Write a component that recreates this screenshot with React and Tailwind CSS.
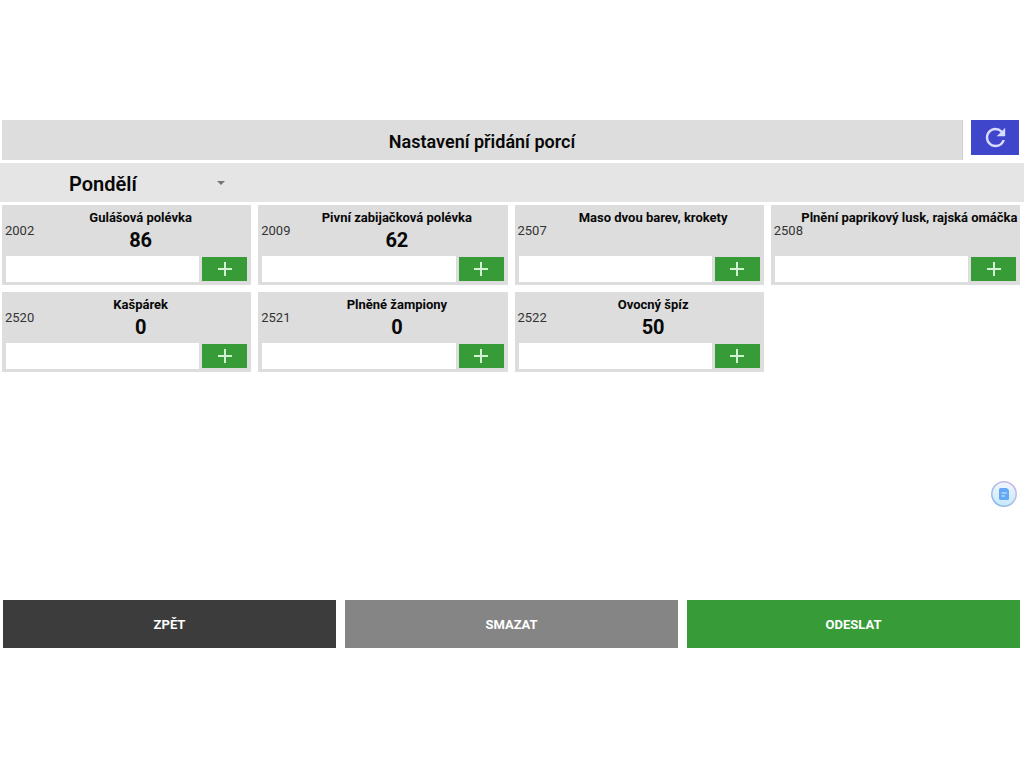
import React from "react";
import { MdRefresh } from "react-icons/md";

const meals = [
  { code: "2002", name: "Gulášová polévka", count: "86" },
  { code: "2009", name: "Pivní zabijačková polévka", count: "62" },
  { code: "2507", name: "Maso dvou barev, krokety", count: "" },
  { code: "2508", name: "Plnění paprikový lusk, rajská omáčka", count: "" },
  { code: "2520", name: "Kašpárek", count: "0" },
  { code: "2521", name: "Plněné žampiony", count: "0" },
  { code: "2522", name: "Ovocný špíz", count: "50" },
];

const days = ["Pondělí", "Úterý", "Středa", "Čtvrtek", "Pátek"];

function MealCard({ code, name, count }) {
  const id = `porce-${code}`;
  return (
    <section className="flex h-20 flex-col bg-[#dddddd]">
      <div className="flex h-[51px]">
        <span className="w-7 shrink-0 pl-[3px] text-[13px] leading-[51px] text-[#333333]">
          {code}
        </span>
        <label htmlFor={id} className="flex min-w-0 flex-1 flex-col pt-1 text-center font-bold text-[#080808]">
          <span className="whitespace-nowrap text-[13px] leading-[18px]">{name}</span>
          <span className="text-[20px] leading-[27px]">{count}</span>
        </label>
      </div>
      <div className="flex items-center gap-[3px] px-1">
        <input
          id={id}
          type="text"
          inputMode="numeric"
          className="h-[26px] min-w-0 flex-1 bg-white px-2 text-[13px] outline-none"
        />
        <button
          type="button"
          aria-label={`Přidat porce: ${name}`}
          className="flex h-6 w-[45px] shrink-0 items-center justify-center bg-[#379c38]"
        >
          <svg width="16" height="16" viewBox="0 0 16 16" fill="none" stroke="#d3f2d3" strokeWidth="2" aria-hidden="true">
            <path d="M8 1v14M1 8h14" />
          </svg>
        </button>
      </div>
    </section>
  );
}

export default function App() {
  return (
    <div className="relative bg-white pt-[120px] font-['Roboto',sans-serif]">
      <header className="flex items-start gap-2 pl-[2px] pr-[5px]">
        <h1 className="h-10 flex-1 border-r border-[#cfcfcf] bg-[#dddddd] text-center text-[18px] font-semibold leading-[43px] text-[#080808]">
          Nastavení přidání porcí
        </h1>
        <button
          type="button"
          aria-label="Obnovit"
          className="flex h-[35px] w-12 items-center justify-center bg-[#4046cc] text-[#d9dcff]"
        >
          <MdRefresh size={29} aria-hidden="true" />
        </button>
      </header>

      <div className="mt-[3px] h-[39px] bg-[#e5e5e5]">
        <div className="relative w-[240px]">
          <select
            aria-label="Den"
            defaultValue="Pondělí"
            className="h-[39px] w-full appearance-none bg-transparent pl-[69px] pt-[2px] text-[20px] font-semibold text-[#080808] outline-none"
          >
            {days.map((day) => (
              <option key={day}>{day}</option>
            ))}
          </select>
          <svg
            width="8"
            height="4"
            viewBox="0 0 8 4"
            className="pointer-events-none absolute right-[15px] top-[18px]"
            aria-hidden="true"
          >
            <path d="M0 0h8L4 4z" fill="#757575" />
          </svg>
        </div>
      </div>

      <main className="mt-[3px] min-h-[395px] pl-[2px] pr-1">
        <div className="grid grid-cols-4 gap-[7px]">
          {meals.map((meal) => (
            <MealCard key={meal.code} {...meal} />
          ))}
        </div>
      </main>

      <footer className="grid grid-cols-3 gap-[9px] pl-[3px] pr-1 text-[13px] font-bold text-white">
        <button type="button" className="h-12 bg-[#3c3c3c] pt-[2px]">ZPĚT</button>
        <button type="button" className="h-12 bg-[#858585] pt-[2px]">SMAZAT</button>
        <button type="button" className="h-12 bg-[#379c38] pt-[2px]">ODESLAT</button>
      </footer>

      <button type="button" aria-label="Poznámky" className="absolute right-[6px] top-[480px] rounded-full">
        <svg width="28" height="28" viewBox="0 0 28 28" fill="none" aria-hidden="true">
          <defs>
            <linearGradient id="ring" x1="24" y1="3" x2="5" y2="25" gradientUnits="userSpaceOnUse">
              <stop stopColor="#c9b4e6" />
              <stop offset="0.5" stopColor="#b3bde8" />
              <stop offset="1" stopColor="#86b8ea" />
            </linearGradient>
            <linearGradient id="disc" x1="14" y1="2" x2="14" y2="26" gradientUnits="userSpaceOnUse">
              <stop stopColor="#f3f5fd" />
              <stop offset="1" stopColor="#c5eafb" />
            </linearGradient>
          </defs>
          <circle cx="14" cy="14" r="12.2" fill="url(#disc)" stroke="url(#ring)" strokeWidth="1.5" />
          <path d="M10.5 8h6.200L19 10.300v8.200a1.500 1.500 0 0 1-1.500 1.500h-7A1.500 1.500 0 0 1 9 18.500v-9A1.500 1.500 0 0 1 10.500 8z" fill="#62a8f5" />
          <path d="M11.500 13h5.500M11.500 16h3.500" stroke="#d8ebff" strokeWidth="1.2" />
        </svg>
      </button>
    </div>
  );
}
